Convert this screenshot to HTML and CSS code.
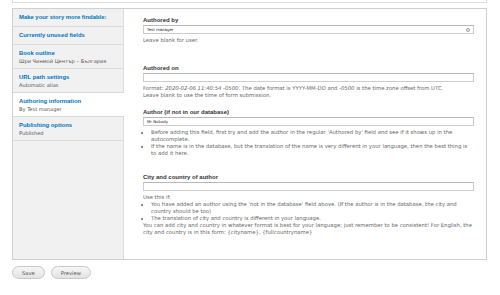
FILE: index.html
```html
<!DOCTYPE html>
<html>
<head>
<meta charset="utf-8">
<link rel="stylesheet" href="styles.css">
</head>
<body>
<div class="page">
  <div class="prev-box"></div>
  <div class="vtabs">
    <ul class="tablist">
      <li class="tab tab-single"><a class="tab-title">Make your story more findable:</a></li>
      <li class="tab tab-single"><a class="tab-title">Currently unused fields</a></li>
      <li class="tab"><a class="tab-title">Book outline</a><span class="tab-summary">Шри Чинмой Център – България</span></li>
      <li class="tab"><a class="tab-title">URL path settings</a><span class="tab-summary">Automatic alias</span></li>
      <li class="tab active"><a class="tab-title">Authoring information</a><span class="tab-summary">By Test manager</span></li>
      <li class="tab"><a class="tab-title">Publishing options</a><span class="tab-summary">Published</span></li>
    </ul>
    <div class="pane">
      <div class="item">
        <label class="lbl">Authored by</label>
        <div class="input"><span class="val">Test manager</span><span class="throbber"></span></div>
        <div class="desc">Leave blank for user.</div>
      </div>
      <div class="item item-on">
        <label class="lbl">Authored on</label>
        <div class="input"></div>
        <div class="desc">Format: <em>2020-02-06 11:40:54 -0500</em>. The date format is YYYY-MM-DD and <em>-0500</em> is the time zone offset from UTC.<br>Leave blank to use the time of form submission.</div>
      </div>
      <div class="item item-author">
        <label class="lbl">Author (if not in our database)</label>
        <div class="input"><span class="val">Mr Nobody</span></div>
        <div class="desc">
          <ul class="bullets">
            <li>Before adding this field, first try and add the author in the regular 'Authored by' field and see if it shows up in the autocomplete.</li>
            <li>If the name is in the database, but the translation of the name is very different in your language, then the best thing is to add it here.</li>
          </ul>
        </div>
      </div>
      <div class="item item-city">
        <label class="lbl">City and country of author</label>
        <div class="input"></div>
        <div class="desc">Use this if:
          <ul class="bullets">
            <li>You have added an author using the 'not in the database' field above. (If the author is in the database, the city and country should be too)</li>
            <li>The translation of city and country is different in your language.</li>
          </ul>
          You can add city and country in whatever format is best for your language; just remember to be consistent! For English, the city and country is in this form: {cityname}, {fullcountryname}
        </div>
      </div>
    </div>
  </div>
  <div class="actions">
    <button class="btn">Save</button>
    <button class="btn">Preview</button>
  </div>
</div>
</body>
</html>
```

FILE: styles.css
```css
html, body {
  margin: 0;
  padding: 0;
  background: #fff;
}
body {
  font-family: "DejaVu Sans", "Liberation Sans", sans-serif;
  color: #333;
}
.page {
  padding: 0 13px 0 12px;
}
.prev-box {
  height: 2px;
  border: 1px solid #ddd;
  border-top: 0;
}
.vtabs {
  margin-top: 5px;
  border: 1px solid #d0d0d0;
  display: flex;
  height: 250px;
}
.tablist {
  list-style: none;
  margin: 0;
  padding: 0;
  width: 110px;
  flex: none;
  background: #f1f1f1;
  border-right: 1px solid #ddd;
}
.tab {
  padding: 4px 6px 3px;
  border-bottom: 1px solid #d8d8d8;
  display: flex;
  flex-direction: column;
}
.tab-single {
  padding-bottom: 5px;
}
.tab.active {
  background: #fff;
  margin-right: -1px;
}
.tab-title {
  font-family: "Liberation Sans", Arial, sans-serif;
  font-weight: bold;
  font-size: 5.9px;
  line-height: 8px;
  color: #0074bd;
  white-space: nowrap;
}
.tab-summary {
  font-size: 5.1px;
  line-height: 8px;
  color: #555;
  white-space: nowrap;
}
.pane {
  flex: 1;
  background: #fff;
  padding: 7px 12px 0 19px;
}
.item-on {
  margin-top: 20px;
}
.item-author {
  margin-top: 9px;
}
.item-city {
  margin-top: 16px;
}
.lbl {
  display: block;
  font-family: "Liberation Sans", Arial, sans-serif;
  font-weight: bold;
  font-size: 6px;
  line-height: 8px;
  color: #333;
  margin-bottom: 1px;
}
.input {
  height: 7px;
  border: 1px solid #ccc;
  border-top-color: #b8b8b8;
  display: flex;
  align-items: center;
  padding: 0 3px;
  position: relative;
}
.val {
  font-size: 3.9px;
  color: #222;
}
.throbber {
  position: absolute;
  right: 3px;
  top: 2px;
  width: 2px;
  height: 2px;
  border: 1px solid #999;
  border-radius: 50%;
}
.desc {
  margin-top: 3px;
  font-size: 5.3px;
  line-height: 7px;
  color: #666;
}
.desc em {
  font-style: italic;
}
.bullets {
  margin: 0;
  padding-left: 8px;
  list-style: disc;
}
.actions {
  display: flex;
  gap: 6px;
  margin-top: 6px;
}
.btn {
  font-family: "DejaVu Sans", sans-serif;
  font-size: 5.2px;
  color: #555;
  height: 13px;
  padding: 0 9px;
  border: 1px solid #c8c8c8;
  border-radius: 7px;
  background: linear-gradient(#f6f6f6, #e2e2e2);
}
```
